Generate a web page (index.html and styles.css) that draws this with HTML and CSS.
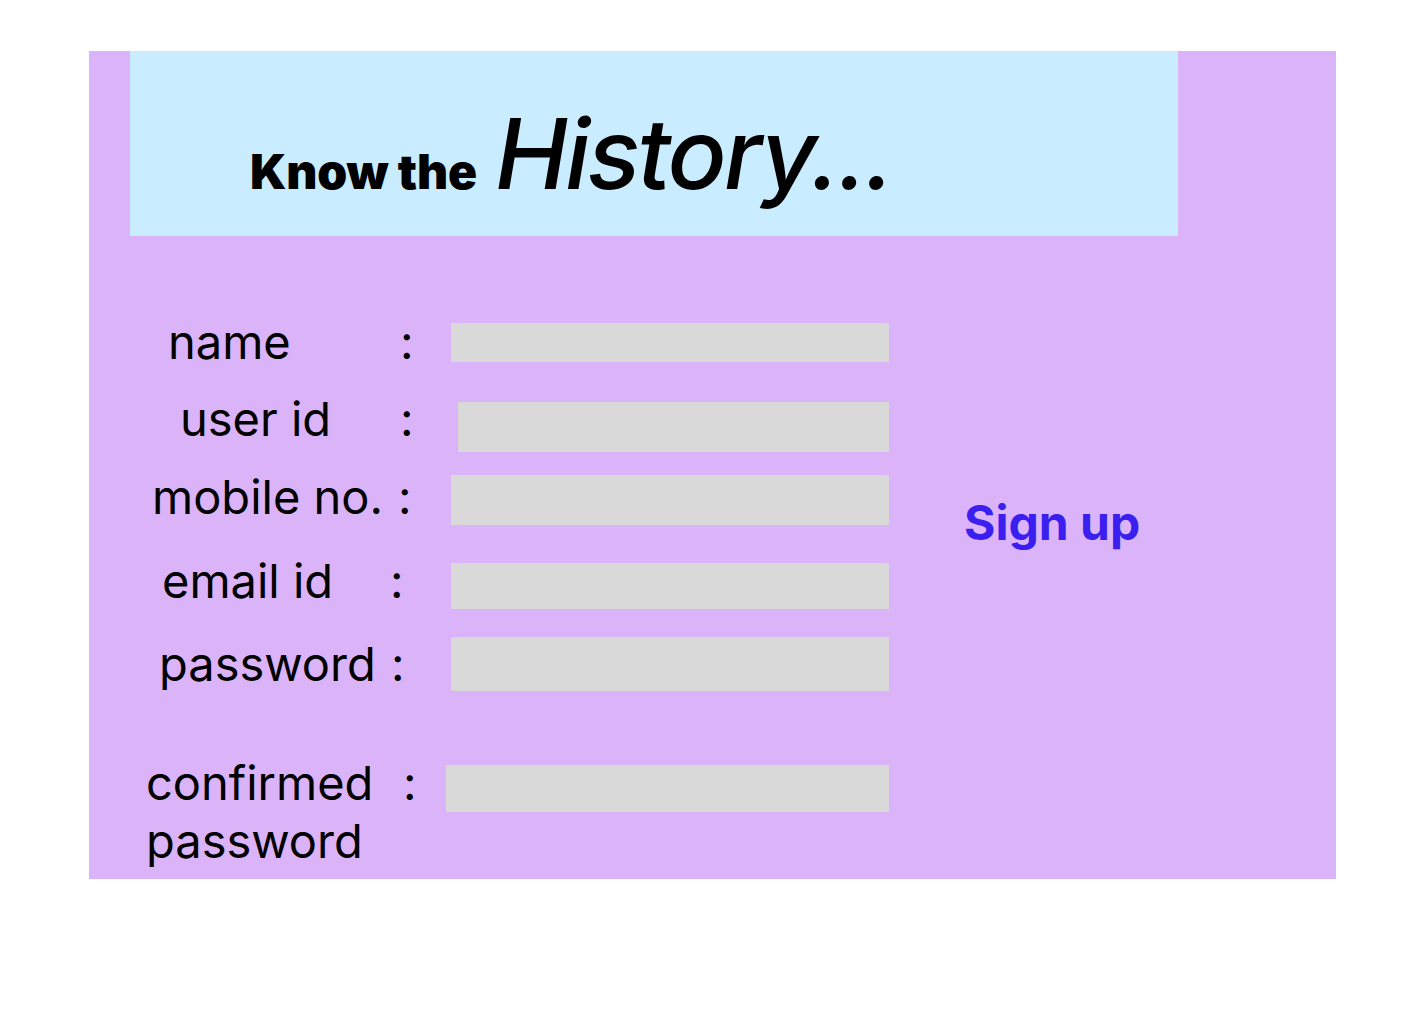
FILE: index.html
```html
<!DOCTYPE html>
<html lang="en">
<head>
<meta charset="utf-8">
<title>Know the History - Sign up</title>
<link rel="stylesheet" href="styles.css">
</head>
<body>
<main class="card">
  <header class="banner">
    <h1 class="title"><span class="title-small">Know the</span><span class="title-big">History...</span></h1>
  </header>
  <section class="content">
    <form class="form">
      <div class="row row-1">
        <label class="lbl"><span class="lbl-text">name</span><span class="colon">:</span></label><span class="field"></span>
      </div>
      <div class="row row-2">
        <label class="lbl"><span class="lbl-text">user id</span><span class="colon">:</span></label><span class="field"></span>
      </div>
      <div class="row row-3">
        <label class="lbl"><span class="lbl-text">mobile no.</span><span class="colon">:</span></label><span class="field"></span>
      </div>
      <div class="row row-4">
        <label class="lbl"><span class="lbl-text">email id</span><span class="colon">:</span></label><span class="field"></span>
      </div>
      <div class="row row-5">
        <label class="lbl"><span class="lbl-text">password</span><span class="colon">:</span></label><span class="field"></span>
      </div>
      <div class="row row-6">
        <label class="lbl"><span class="lbl-text">confirmed<br>password</span><span class="colon">:</span></label><span class="field"></span>
      </div>
    </form>
    <div class="signup">Sign up</div>
  </section>
</main>
</body>
</html>
```

FILE: styles.css
```css
html, body {
  margin: 0;
  padding: 0;
  background: #ffffff;
}

body {
  font-family: Inter, "Noto Sans", sans-serif;
  color: #000000;
}

.card {
  margin: 51px 0 0 89px;
  width: 1247px;
  height: 828px;
  background: #dab3f8;
  display: flex;
  flex-direction: column;
}

.banner {
  margin-left: 41px;
  width: 1048px;
  height: 185px;
  background: #c9ecfe;
  box-sizing: border-box;
  padding-left: 120px;
  padding-top: 54px;
}

.title {
  margin: 0;
  font-weight: normal;
  line-height: 1;
  white-space: nowrap;
}

.title-small {
  font-family: Inter, sans-serif;
  font-weight: 900;
  font-size: 48px;
  letter-spacing: -0.2px;
  margin-right: 18px;
}

.title-big {
  font-family: Inter, sans-serif;
  font-style: italic;
  font-weight: 500;
  font-size: 98px;
  letter-spacing: -2.6px;
}

.content {
  display: flex;
  align-items: flex-start;
}

.form {
  display: flex;
  flex-direction: column;
  width: 800px;
}

.row {
  display: flex;
  align-items: center;
  font-size: 47px;
  line-height: 1.2;
}

.lbl {
  display: flex;
  align-items: baseline;
  white-space: nowrap;
}

.lbl-text {
  flex: none;
}

.colon {
  width: 20px;
  flex: none;
}

.field {
  background: #d9d9d9;
  flex: none;
}

.row-1 { margin-top: 87px; height: 39px; }
.row-1 .lbl-text { margin-left: 79px; width: 232px; }
.row-1 .field { margin-left: 31px; width: 438px; height: 39px; }

.row-2 { margin-top: 40px; height: 50px; }
.row-2 .lbl { margin-bottom: 16px; }
.row-2 .lbl-text { margin-left: 91px; width: 220px; }
.row-2 .field { margin-left: 38px; width: 431px; height: 50px; }

.row-3 { margin-top: 23px; height: 50px; }
.row-3 .lbl { margin-bottom: 6px; }
.row-3 .lbl-text { margin-left: 63px; width: 246px; }
.row-3 .field { margin-left: 33px; width: 438px; height: 50px; }

.row-4 { margin-top: 38px; height: 46px; }
.row-4 .lbl { margin-bottom: 10px; }
.row-4 .lbl-text { margin-left: 73px; width: 228px; }
.row-4 .field { margin-left: 41px; width: 438px; height: 46px; }

.row-5 { margin-top: 28px; height: 54px; }
.row-5 .lbl-text { margin-left: 70px; width: 232px; }
.row-5 .field { margin-left: 40px; width: 438px; height: 54px; }

.row-6 { margin-top: 74px; height: 47px; align-items: flex-start; }
.row-6 .lbl { margin-top: -11px; line-height: 58px; align-items: flex-start; }
.row-6 .lbl-text { margin-left: 57px; width: 257px; }
.row-6 .field { margin-left: 23px; width: 443px; height: 47px; }

.signup {
  margin-left: 75px;
  margin-top: 258px;
  font-weight: 700;
  font-size: 48px;
  line-height: 1.2;
  color: #3b1fef;
  letter-spacing: 0;
}
```
